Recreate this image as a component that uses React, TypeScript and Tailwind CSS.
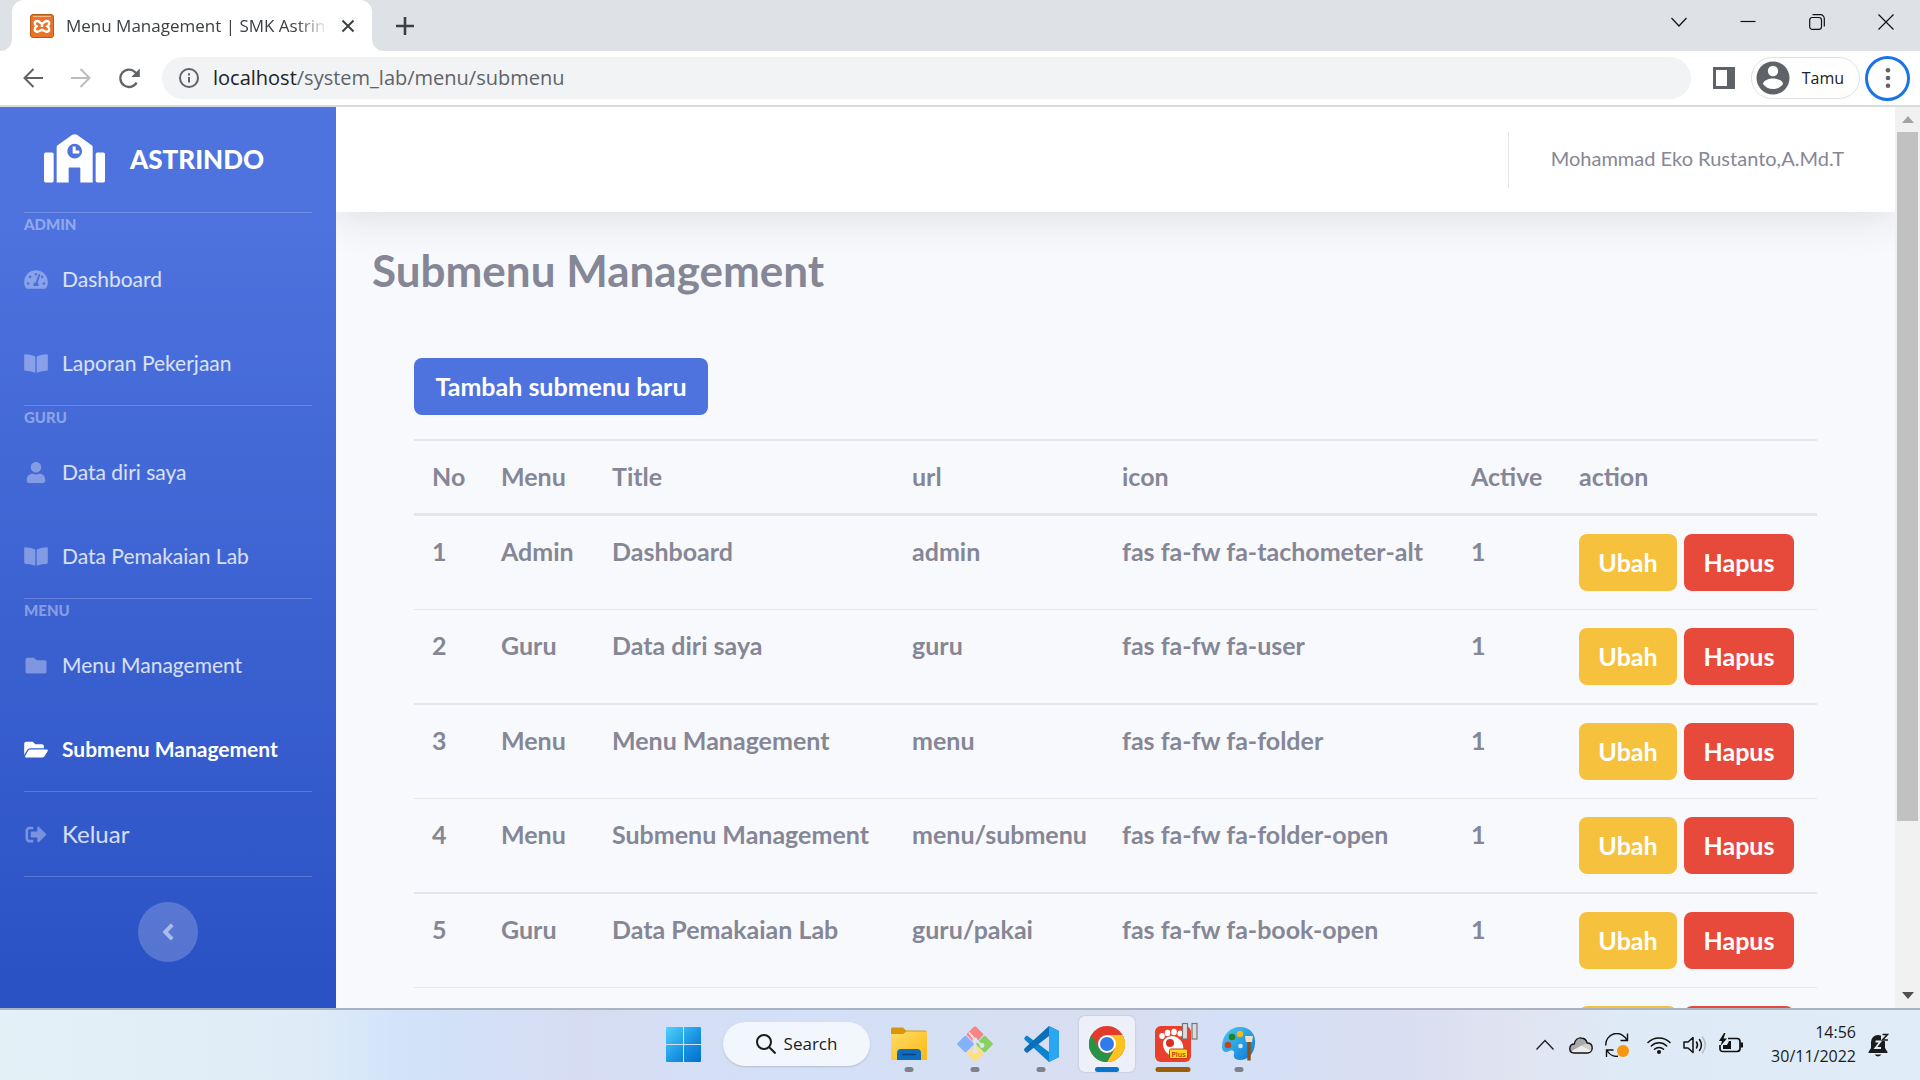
import type { ReactNode } from "react";
import {
  FaAngleLeft,
  FaBookOpen,
  FaFolder,
  FaFolderOpen,
  FaSignOutAlt,
  FaTachometerAlt,
  FaUser,
} from "react-icons/fa";

/* ---------- Browser ---------- */

function XamppIcon() {
  return (
    <svg viewBox="0 0 24 24" className="size-6 shrink-0" aria-hidden="true">
      <rect x="0.5" y="0.5" width="23" height="23" rx="2.5" fill="#e8742a" stroke="#b9561a" />
      <path d="M3 2.5h18" stroke="#f6b68a" strokeWidth="1" />
      <path
        d="M7.500 7C4.200 7 4 10.500 6.500 12.300C4 14 4.200 17.800 7.500 17.800C9.500 17.800 10 16 12 16C14 16 14.500 17.800 16.500 17.800C19.800 17.800 20 14 17.500 12.300C20 10.500 19.800 7 16.500 7C14.500 7 14.300 9.300 12 9.300C9.700 9.300 9.500 7 7.500 7Z"
        fill="none"
        stroke="#fff"
        strokeWidth="2.400"
      />
      <path d="M12 9.500v3.500" stroke="#fff" strokeWidth="2.400" />
    </svg>
  );
}

function TabStrip() {
  return (
    <div className="flex h-[51px] shrink-0 justify-between bg-[#dee1e6]">
      <div className="flex">
        <div className="flex items-end">
          <div className="h-3 w-3 bg-white">
            <div className="size-3 rounded-br-xl bg-[#dee1e6]" />
          </div>
        </div>
        <div className="flex w-[360px] items-center rounded-t-xl bg-white pr-4 pl-[18px]">
          <XamppIcon />
          <span className="ml-3 flex-1 overflow-hidden whitespace-nowrap text-[17px] leading-6 text-[#3c4043] [mask-image:linear-gradient(to_right,black_88%,transparent)]">
            Menu Management | SMK Astrindo
          </span>
          <button type="button" aria-label="Close tab" className="ml-3 p-px">
            <svg viewBox="0 0 14 14" className="size-[14px]" fill="none" stroke="#3c4043" strokeWidth="2">
              <path d="M1.500 1.500l11 11M12.500 1.500l-11 11" />
            </svg>
          </button>
        </div>
        <div className="flex items-end">
          <div className="h-3 w-3 bg-white">
            <div className="size-3 rounded-bl-xl bg-[#dee1e6]" />
          </div>
        </div>
        <button type="button" aria-label="New tab" className="ml-3 self-center">
          <svg viewBox="0 0 18 18" className="size-[18px]" fill="none" stroke="#3c4043" strokeWidth="2.600">
            <path d="M9 0v18M0 9h18" />
          </svg>
        </button>
      </div>
      <div className="flex h-[43px] items-center gap-[53px] pr-[26px]">
        <button type="button" aria-label="Search tabs">
          <svg viewBox="0 0 16 16" className="size-4" fill="none" stroke="#111" strokeWidth="1.200">
            <path d="M0.500 4l7.500 8l7.500-8" />
          </svg>
        </button>
        <button type="button" aria-label="Minimize">
          <svg viewBox="0 0 16 16" className="size-4" fill="none" stroke="#111" strokeWidth="1.200">
            <path d="M0.500 7.500h15" />
          </svg>
        </button>
        <button type="button" aria-label="Restore">
          <svg viewBox="0 0 16 16" className="size-4" fill="none" stroke="#111" strokeWidth="1.200">
            <rect x="0.700" y="3.500" width="11.800" height="11.800" rx="2.500" />
            <path d="M3.500 0.700h8a3.800 3.800 0 0 1 3.800 3.800v8" />
          </svg>
        </button>
        <button type="button" aria-label="Close">
          <svg viewBox="0 0 16 16" className="size-4" fill="none" stroke="#111" strokeWidth="1.200">
            <path d="M0.500 0.500l15 15M15.500 0.500l-15 15" />
          </svg>
        </button>
      </div>
    </div>
  );
}

function Toolbar() {
  return (
    <div className="flex h-[56px] shrink-0 items-center border-b-2 border-[#dadbdd] bg-white pr-[10px] pl-[23px]">
      <button type="button" aria-label="Back">
        <svg viewBox="0 0 20 20" className="size-5" fill="none" stroke="#5f6368" strokeWidth="2">
          <path d="M20 10H2M10.500 1L1.500 10l9 9" />
        </svg>
      </button>
      <button type="button" aria-label="Forward" className="ml-7">
        <svg viewBox="0 0 20 20" className="size-5" fill="none" stroke="#bbbcbe" strokeWidth="2">
          <path d="M0 10h18M9.500 1l9 9l-9 9" />
        </svg>
      </button>
      <button type="button" aria-label="Reload" className="ml-7">
        <svg viewBox="0 0 21 21" className="size-[21px]" fill="none" stroke="#5f6368" strokeWidth="2.300">
          <path d="M17.600 14.600A8.700 8.700 0 1 1 16.300 4.200L18 6" />
          <path d="M20.800 0.500v8.500h-8.500z" fill="#5f6368" stroke="none" />
        </svg>
      </button>
      <label className="ml-[22px] flex h-[42px] flex-1 items-center rounded-full bg-[#f1f3f4] pl-[17px]">
        <svg viewBox="0 0 20 20" className="size-5 shrink-0" fill="none" stroke="#5f6368" strokeWidth="2">
          <circle cx="10" cy="10" r="9" />
          <path d="M10 9v5.500M10 5.200v2.200" />
        </svg>
        <span className="relative ml-1 flex-1 text-[20px] leading-7">
          <span className="px-[10px] text-[#5f6368]">
            <span className="text-[#202124]">localhost</span>/system_lab/menu/submenu
          </span>
          <input aria-label="Address" className="absolute inset-0 w-full bg-transparent outline-none" />
        </span>
      </label>
      <button type="button" aria-label="Side panel" className="ml-[22px]">
        <svg viewBox="0 0 22 22" className="size-[22px]">
          <rect width="22" height="22" fill="#5f6368" />
          <rect x="3" y="3" width="11" height="16" fill="#fff" />
        </svg>
      </button>
      <button
        type="button"
        className="ml-4 flex h-[42px] items-center rounded-full border border-[#dfe1e4] pr-[15px] pl-1 text-base leading-6 text-[#202124]"
      >
        <svg viewBox="0 0 34 34" className="mr-3 size-[34px]">
          <circle cx="17" cy="17" r="16.500" fill="#5f6368" />
          <circle cx="17" cy="10" r="5.200" fill="#fff" />
          <path d="M7 23c0-3.500 6-5.500 10-5.500s10 2 10 5.500c-2 3-6 5-10 5s-8-2-10-5z" fill="#fff" />
        </svg>
        Tamu
      </button>
      <button
        type="button"
        aria-label="Browser menu"
        className="ml-[5px] flex size-[45px] items-center justify-center rounded-full border-3 border-[#1a73e8]"
      >
        <svg viewBox="0 0 6 20" className="h-5 w-[6px]" fill="#5f6368">
          <circle cx="3" cy="2.300" r="2.300" />
          <circle cx="3" cy="10" r="2.300" />
          <circle cx="3" cy="17.700" r="2.300" />
        </svg>
      </button>
    </div>
  );
}

/* ---------- Sidebar ---------- */

type NavItem = { label: string; icon: ReactNode; active?: boolean };

const iconSize = "h-[21px] w-6";

const sections: { heading: string; items: NavItem[] }[] = [
  {
    heading: "ADMIN",
    items: [
      { label: "Dashboard", icon: <FaTachometerAlt className={iconSize} /> },
      { label: "Laporan Pekerjaan", icon: <FaBookOpen className={iconSize} /> },
    ],
  },
  {
    heading: "GURU",
    items: [
      { label: "Data diri saya", icon: <FaUser className={iconSize} /> },
      { label: "Data Pemakaian Lab", icon: <FaBookOpen className={iconSize} /> },
    ],
  },
  {
    heading: "MENU",
    items: [
      { label: "Menu Management", icon: <FaFolder className={iconSize} /> },
      { label: "Submenu Management", icon: <FaFolderOpen className={iconSize} />, active: true },
    ],
  },
];

function Divider() {
  return <hr className="border-t border-white/20" />;
}

function SchoolIcon() {
  return (
    <svg viewBox="133 101 183 146" className="h-[49px] w-[61px]" fill="#fff" aria-hidden="true">
      <rect x="133" y="156" width="29" height="90" rx="5" />
      <rect x="288" y="156" width="28" height="90" rx="5" />
      <path
        fillRule="evenodd"
        d="M171 246V140q0-4 3-6L218 103q7-4 14 0L276 134q3 2 3 6V246H242V203q0-2-2-2H209q-2 0-2 2V246ZM225 130a22 22 0 1 0 0.010 0Z"
      />
      <path d="M219 138h9v12h11v9h-20z" />
    </svg>
  );
}

function Sidebar() {
  return (
    <aside className="w-[336px] shrink-0 overflow-hidden bg-[linear-gradient(180deg,#4e73df_12%,#2a51c4_100%)] px-6 font-['Lato',sans-serif]">
      <a href="#home" className="flex h-[105px] items-center gap-[25px] pb-0.5 pl-5 text-[26px] leading-9 font-black text-white">
        <SchoolIcon />
        ASTRINDO
      </a>
      <nav>
        {sections.map((section) => (
          <div key={section.heading}>
            <Divider />
            <h2 className="h-6 text-[15px] leading-[22px] font-black text-white/40">{section.heading}</h2>
            {section.items.map((item) => (
              <a
                key={item.label}
                href="#menu"
                className={
                  item.active
                    ? "flex h-[84px] items-center gap-[14px] text-[21px] leading-8 font-bold whitespace-nowrap text-white"
                    : "flex h-[84px] items-center gap-[14px] text-[21px] leading-8 whitespace-nowrap text-white/80"
                }
              >
                <span className={item.active ? "text-white" : "text-white/35"}>{item.icon}</span>
                {item.label}
              </a>
            ))}
          </div>
        ))}
        <Divider />
        <a href="#logout" className="flex h-[84px] items-center gap-[14px] text-2xl leading-8 text-white/80">
          <span className="text-white/35">
            <FaSignOutAlt className={iconSize} />
          </span>
          Keluar
        </a>
        <Divider />
      </nav>
      <button
        type="button"
        aria-label="Collapse sidebar"
        className="mx-auto mt-[25px] flex size-[60px] items-center justify-center rounded-full bg-white/20 text-[26px] text-white/50"
      >
        <FaAngleLeft />
      </button>
    </aside>
  );
}

/* ---------- Page content ---------- */

const columns = [
  { name: "No", width: "w-[69px]" },
  { name: "Menu", width: "w-[111px]" },
  { name: "Title", width: "w-[300px]" },
  { name: "url", width: "w-[210px]" },
  { name: "icon", width: "w-[349px]" },
  { name: "Active", width: "w-[108px]" },
  { name: "action", width: "" },
];

const rows = [
  ["1", "Admin", "Dashboard", "admin", "fas fa-fw fa-tachometer-alt", "1"],
  ["2", "Guru", "Data diri saya", "guru", "fas fa-fw fa-user", "1"],
  ["3", "Menu", "Menu Management", "menu", "fas fa-fw fa-folder", "1"],
  ["4", "Menu", "Submenu Management", "menu/submenu", "fas fa-fw fa-folder-open", "1"],
  ["5", "Guru", "Data Pemakaian Lab", "guru/pakai", "fas fa-fw fa-book-open", "1"],
];

function RowActions() {
  return (
    <div className="flex gap-[7px] text-white">
      <button type="button" className="h-[57px] min-w-[98px] rounded-lg bg-[#f6c23e] pb-0.5">
        Ubah
      </button>
      <button type="button" className="h-[57px] min-w-[110px] rounded-lg bg-[#e74a3b] pb-0.5">
        Hapus
      </button>
    </div>
  );
}

function SubmenuTable() {
  return (
    <table className="mt-6 w-full table-fixed border-separate border-spacing-0 text-left">
      <thead>
        <tr>
          {columns.map((c) => (
            <th
              key={c.name}
              scope="col"
              className={`${c.width} border-t-2 border-b-3 border-[#e3e6ec] px-[18px] pt-[17px] pb-[19px] font-bold`}
            >
              {c.name}
            </th>
          ))}
        </tr>
      </thead>
      <tbody className="align-top whitespace-nowrap [&>tr:nth-child(2n)>td]:border-b-2 [&>tr>td]:border-b [&>tr>td]:border-[#e3e6ec] [&>tr>td]:px-[18px] [&>tr>td]:pt-[17px] [&>tr>td]:pb-[18px] [&>tr>td:last-child]:pt-[18px]">
        {rows.map((row) => (
          <tr key={row[2]}>
            {row.map((cell, i) => (
              <td key={i}>{cell}</td>
            ))}
            <td>
              <RowActions />
            </td>
          </tr>
        ))}
        <tr>
          <td colSpan={6} />
          <td>
            <RowActions />
          </td>
        </tr>
      </tbody>
    </table>
  );
}

function Content() {
  return (
    <div className="flex-1 overflow-hidden bg-[#f8f9fc] font-['Lato',sans-serif] text-[#858796]">
      <header className="flex h-[105px] items-center justify-end bg-white pr-[51px] shadow-[0_4px_42px_rgba(58,59,69,0.15)]">
        <div className="h-14 border-l border-[#e3e6f0]" />
        <span className="ml-[42px] pb-1 text-[20px] leading-7">Mohammad Eko Rustanto,A.Md.T</span>
      </header>
      <h1 className="mt-[30px] ml-9 text-[44px] leading-14 font-bold">Submenu Management</h1>
      <main className="mx-[78px] mt-[60px] text-[25px] leading-9 font-bold">
        <button type="button" className="block h-[57px] min-w-[294px] rounded-lg bg-[#4e73df] pb-0.5 text-white">
          Tambah submenu baru
        </button>
        <SubmenuTable />
      </main>
    </div>
  );
}

function Scrollbar() {
  return (
    <div className="flex w-[25px] shrink-0 flex-col items-center bg-[#f1f1f1]">
      <div className="flex h-[25px] shrink-0 items-center">
        <svg viewBox="0 0 12 7" className="h-[7px] w-3">
          <path d="M0 7l6-7l6 7z" fill="#a3a3a3" />
        </svg>
      </div>
      <div className="w-full flex-1">
        <div className="mx-auto h-[81%] w-[21px] bg-[#c1c1c1]" />
      </div>
      <div className="flex h-[25px] shrink-0 items-center">
        <svg viewBox="0 0 12 7" className="h-[7px] w-3">
          <path d="M0 0l6 7l6-7z" fill="#505050" />
        </svg>
      </div>
    </div>
  );
}

/* ---------- Taskbar ---------- */

function WindowsIcon() {
  return (
    <svg viewBox="0 0 35 35" className="size-[35px]">
      <defs>
        <linearGradient id="win" gradientUnits="userSpaceOnUse" x1="0" y1="0" x2="35" y2="35">
          <stop offset="0" stopColor="#4fd2ff" />
          <stop offset="0.600" stopColor="#1590e0" />
          <stop offset="1" stopColor="#0070cf" />
        </linearGradient>
      </defs>
      <g fill="url(#win)">
        <path d="M1 0h16v17H0V1q0-1 1-1zM18 0h16q1 0 1 1v16H18zM0 18h17v17H1q-1 0-1-1zM18 18h17v16q0 1-1 1H18z" />
      </g>
    </svg>
  );
}

function ExplorerIcon() {
  return (
    <svg viewBox="0 0 36 36" className="size-9">
      <defs>
        <linearGradient id="folder" x1="0" y1="0" x2="1" y2="1">
          <stop offset="0" stopColor="#ffdc66" />
          <stop offset="1" stopColor="#fbb914" />
        </linearGradient>
      </defs>
      <path d="M0 3q0-1.500 1.500-1.500H12l3 3h19q2 0 2 2V12H0z" fill="#d9960a" />
      <path d="M0 8h12l3.500-2.500H36V34H0z" fill="url(#folder)" />
      <path d="M6 34V27q0-4 4-4h16q4 0 4 4v7z" fill="#0f6cbd" />
      <path d="M11 28.500h14" stroke="#0a3f78" strokeWidth="1.500" />
    </svg>
  );
}

function GitIcon() {
  return (
    <svg viewBox="0 0 36 36" className="size-9">
      <g transform="rotate(45 18 18)">
        <rect x="5" y="5" width="12.500" height="12.500" rx="1.500" fill="#f98383" />
        <rect x="18.500" y="5" width="12.500" height="12.500" rx="1.500" fill="#86d160" />
        <rect x="18.500" y="18.500" width="12.500" height="12.500" rx="1.500" fill="#fce07f" />
        <rect x="5" y="18.500" width="12.500" height="12.500" rx="1.500" fill="#83b1fb" />
      </g>
      <path d="M12 6.500l6 7v12M18 13l7 6.500" stroke="#dfe4f3" strokeWidth="2" fill="none" />
      <g fill="#dfe4f3">
        <circle cx="18" cy="14" r="2.400" />
        <circle cx="18" cy="25" r="2.600" />
        <circle cx="25" cy="19.500" r="2.400" />
      </g>
    </svg>
  );
}

function VsCodeIcon() {
  return (
    <svg viewBox="0 0 36 36" className="size-9">
      <path d="M26 0L36 5V31L26 36L2.500 14.500Q0 12.500 2.500 10.500L4 9.500L26 26Z" fill="#0b84cf" />
      <path d="M26 0L2.500 21.500Q0 23.500 2 25.500L4 27L26 10Z" fill="#0a6fb8" />
      <path d="M26 0l8.500 4.200q1.500 1 1.500 2.500v22.600q0 1.500-1.500 2.500L26 36z" fill="#2aa7f0" />
    </svg>
  );
}

function ChromeIcon() {
  return (
    <svg viewBox="0 0 36 36" className="size-9">
      <circle cx="18" cy="18" r="18" fill="#e23b2e" />
      <path d="M18 9H33.600A18 18 0 0 1 18 36L25.800 22.500Z" fill="#fcc31e" />
      <path d="M2.400 9L10.200 22.500A9 9 0 0 0 25.800 22.500L18 36A18 18 0 0 1 2.400 9Z" fill="#269346" />
      <circle cx="18" cy="18" r="9" fill="#fff" />
      <circle cx="18" cy="18" r="7" fill="#2f7bea" />
    </svg>
  );
}

function GomIcon() {
  return (
    <svg viewBox="0 4 36 36" className="size-9 overflow-visible">
      <rect x="0" y="4" width="36" height="36" rx="6" fill="#ea3f2c" />
      <g fill="#fff">
        <ellipse cx="7" cy="14" rx="2.800" ry="3" />
        <ellipse cx="12.500" cy="11" rx="2.800" ry="3.300" />
        <ellipse cx="19" cy="10" rx="2.800" ry="3.300" />
        <ellipse cx="25" cy="11.500" rx="2.600" ry="3" />
        <path d="M8 20a9.500 9 0 0 1 16-3c4 3 5 8 4 13c-1 4-6 5-11 4c-5-1-10-8-9-14z" />
      </g>
      <circle cx="15" cy="21" r="4" fill="#d8301f" />
      <rect x="14.500" y="27" width="18" height="9.500" rx="1.500" fill="#ffd91c" stroke="#c93a12" />
      <text x="23.500" y="34.500" textAnchor="middle" fontSize="7" fontWeight="600" fill="#b5310b">
        Plus
      </text>
      <g fill="#dcdcdc" stroke="#777" strokeWidth="1.200">
        <rect x="27.500" y="1.500" width="5" height="15.500" />
        <rect x="37" y="1.500" width="5" height="15.500" />
      </g>
    </svg>
  );
}

function PaintIcon() {
  return (
    <svg viewBox="0 0 36 36" className="size-9">
      <defs>
        <linearGradient id="palette" x1="0" y1="0" x2="1" y2="1">
          <stop offset="0" stopColor="#4cc9f5" />
          <stop offset="1" stopColor="#0a78d4" />
        </linearGradient>
      </defs>
      <path
        d="M19 1C30 1 35 9 34 18C33 28 27 34 19 34C14 34 12 31 13 28C14 25 11 23 8 25C5 27 1 26 1 21C1 9 9 1 19 1Z"
        fill="url(#palette)"
      />
      <circle cx="7" cy="19" r="3.300" fill="#c4431f" />
      <circle cx="11" cy="11" r="3.300" fill="#20861f" />
      <circle cx="19" cy="8" r="3.300" fill="#f4b91b" />
      <circle cx="19.500" cy="20" r="2.300" fill="#d9e6f8" />
      <path d="M24 10h8l-1 6h-6z" fill="#f1dfc4" />
      <path d="M26.300 16h3.400v18.500h-3.400z" fill="#8d5117" />
    </svg>
  );
}

const apps = [
  { name: "File Explorer", icon: <ExplorerIcon />, bar: "w-[9px] bg-[#7d828c]", tile: "" },
  { name: "Git Bash", icon: <GitIcon />, bar: "w-[9px] bg-[#7d828c]", tile: "" },
  { name: "Visual Studio Code", icon: <VsCodeIcon />, bar: "w-[9px] bg-[#7d828c]", tile: "" },
  { name: "Chrome", icon: <ChromeIcon />, bar: "w-6 bg-[#0a73cc]", tile: "bg-[#edf0f8] shadow-[0_0_2px_rgba(0,0,0,0.2)]" },
  { name: "GOM Player", icon: <GomIcon />, bar: "w-[35px] bg-[#9c5d0c]", tile: "" },
  { name: "Paint", icon: <PaintIcon />, bar: "w-[9px] bg-[#7d828c]", tile: "" },
];

function Tray() {
  return (
    <div className="flex items-center justify-end pr-[31px] text-[#1b1b1b]">
      <button type="button" aria-label="Show hidden icons">
        <svg viewBox="0 0 18 18" className="size-[18px]" fill="none" stroke="#222" strokeWidth="1.400">
          <path d="M0.500 13.500L9 4.500l8.500 9" />
        </svg>
      </button>
      <button type="button" aria-label="OneDrive" className="ml-[15px]">
        <svg viewBox="0 0 24 24" className="size-6">
          <path d="M5 20C2 20 0.800 18 0.800 15.500C0.800 12.500 3 11 5.300 11C6 7 9 4.500 12.500 5C15.500 5.300 17.500 7.500 18.200 10C21.500 10 23.200 12.300 23.200 15C23.200 18 21 20 18.500 20Z" fill="#a9a9a9" />
          <path d="M5 20C3.500 20 2.500 19.300 1.800 18.500L12.500 12.500L22.500 17.500C21.800 19 20.500 20 18.500 20Z" fill="#ececec" />
          <path d="M12.500 12.500L18.200 10C21.500 10 23.200 12.300 23.200 15C23.200 16 23 17 22.500 17.500Z" fill="#cfcfcf" />
          <path d="M5 20C2 20 0.800 18 0.800 15.500C0.800 12.500 3 11 5.300 11C6 7 9 4.500 12.500 5C15.500 5.300 17.500 7.500 18.200 10C21.500 10 23.200 12.300 23.200 15C23.200 18 21 20 18.500 20Z" fill="none" stroke="#111" strokeWidth="1.400" />
        </svg>
      </button>
      <button type="button" aria-label="Update available" className="ml-3">
        <svg viewBox="0 0 24 24" className="size-6" fill="none" stroke="#111" strokeWidth="1.400">
          <path d="M0.800 12.500A11 11 0 0 1 22 7.500M22.500 0.500v7h-7M13 23.300A11 11 0 0 1 1.800 17M1.500 24v-7h7" />
          <circle cx="18" cy="18" r="6" fill="#f8960c" stroke="none" />
        </svg>
      </button>
      <button type="button" aria-label="Network" className="ml-[18px]">
        <svg viewBox="0 0 24 24" className="size-6" fill="none" stroke="#111" strokeWidth="1.500" strokeLinecap="round">
          <path d="M1 9.500a15.500 15.500 0 0 1 22 0M4.300 13a10.900 10.900 0 0 1 15.400 0M7.500 16.300a6.400 6.400 0 0 1 9 0" />
          <circle cx="12" cy="19" r="2" fill="#111" stroke="none" />
        </svg>
      </button>
      <button type="button" aria-label="Volume" className="ml-3">
        <svg viewBox="0 0 24 24" className="size-6" fill="none" stroke="#111" strokeWidth="1.500" strokeLinejoin="round" strokeLinecap="round">
          <path d="M1 9v6h4l5 4.500v-15L5 9z" />
          <path d="M13.500 9q2 3 0 6M16.500 6.500q3.800 5.500 0 11" />
          <path d="M19.500 4q5.500 8 0 16" stroke="#b5bbc4" />
        </svg>
      </button>
      <button type="button" aria-label="Battery" className="ml-3">
        <svg viewBox="0 0 24 24" className="size-6" fill="none" stroke="#111" strokeWidth="1.700">
          <path d="M9 5.500h9q3 0 3 3v7q0 3-3 3H4q-3 0-3-3V12" />
          <path d="M4 12h4l2-4h2v8H4z" fill="#111" stroke="none" />
          <path d="M21.500 9.500h2.500v5h-2.500z" fill="#111" stroke="none" />
          <path d="M5 0L0 8h3l-1.500 5L8 5.500H4.500L6.500 0z" fill="#111" stroke="none" />
        </svg>
      </button>
      <div className="ml-7 pb-0.5 text-right text-base leading-6">
        <div>14:56</div>
        <div>30/11/2022</div>
      </div>
      <button type="button" aria-label="Notifications" className="ml-3">
        <svg viewBox="0 0 21 24" className="h-6 w-[21px]">
          <path d="M10 2a7 7 0 0 0-7 7v6l-2.500 4v1h19v-1L17 15V9a7 7 0 0 0-7-7z" fill="#1b1b1b" />
          <path d="M6.500 21.500h7q-3.500 4-7 0z" fill="#1b1b1b" />
          <path d="M7.500 8.500h5l-5 6.500h5.500" fill="none" stroke="#e3edf8" strokeWidth="1.800" />
          <path d="M13 0h8v8h-8z" fill="#e3edf8" />
          <path d="M14.500 1.500h5l-5 5.500h5.500" fill="none" stroke="#1b1b1b" strokeWidth="1.600" />
        </svg>
      </button>
    </div>
  );
}

function Taskbar() {
  return (
    <footer className="grid h-[72px] shrink-0 grid-cols-[1fr_auto_1fr] border-t-2 border-[#aab3c1] bg-[linear-gradient(90deg,#e3f0f6_0%,#dfecf7_16%,#d2e3fa_21%,#d6ddf2_30%,#d3e0f7_42%,#d8def0_58%,#d4e0f7_64%,#dadff1_74%,#e0e4f1_79%,#deebf7_85%,#e0ecf8_100%)]">
      <div />
      <div className="flex items-center pb-0.5 pl-[2px]">
        <button type="button" aria-label="Start" className="flex w-14 justify-center">
          <WindowsIcon />
        </button>
        <button
          type="button"
          className="ml-3 flex h-11 w-[147px] items-center justify-center gap-2 rounded-full bg-[#f2f6fd] text-[17px] leading-6 text-[#1b1b1b] shadow-[0_1px_2px_rgba(0,0,0,0.15)]"
        >
          <svg viewBox="0 0 20 20" className="size-5" fill="none" stroke="#1b1b1b" strokeWidth="2">
            <circle cx="8" cy="8" r="7" />
            <path d="M13 13l6.500 6.500" />
          </svg>
          Search
        </button>
        <div className="ml-[11px] flex gap-[10px]">
          {apps.map((app) => (
            <button
              key={app.name}
              type="button"
              aria-label={app.name}
              className={`relative flex size-14 items-center justify-center rounded-md ${app.tile}`}
            >
              {app.icon}
              <span className={`absolute bottom-0 left-1/2 h-[5px] -translate-x-1/2 rounded-full ${app.bar}`} />
            </button>
          ))}
        </div>
      </div>
      <Tray />
    </footer>
  );
}

export default function App() {
  return (
    <div className="flex h-screen flex-col overflow-hidden font-['Open_Sans',sans-serif]">
      <TabStrip />
      <Toolbar />
      <div className="flex min-h-0 flex-1">
        <Sidebar />
        <Content />
        <Scrollbar />
      </div>
      <Taskbar />
    </div>
  );
}
